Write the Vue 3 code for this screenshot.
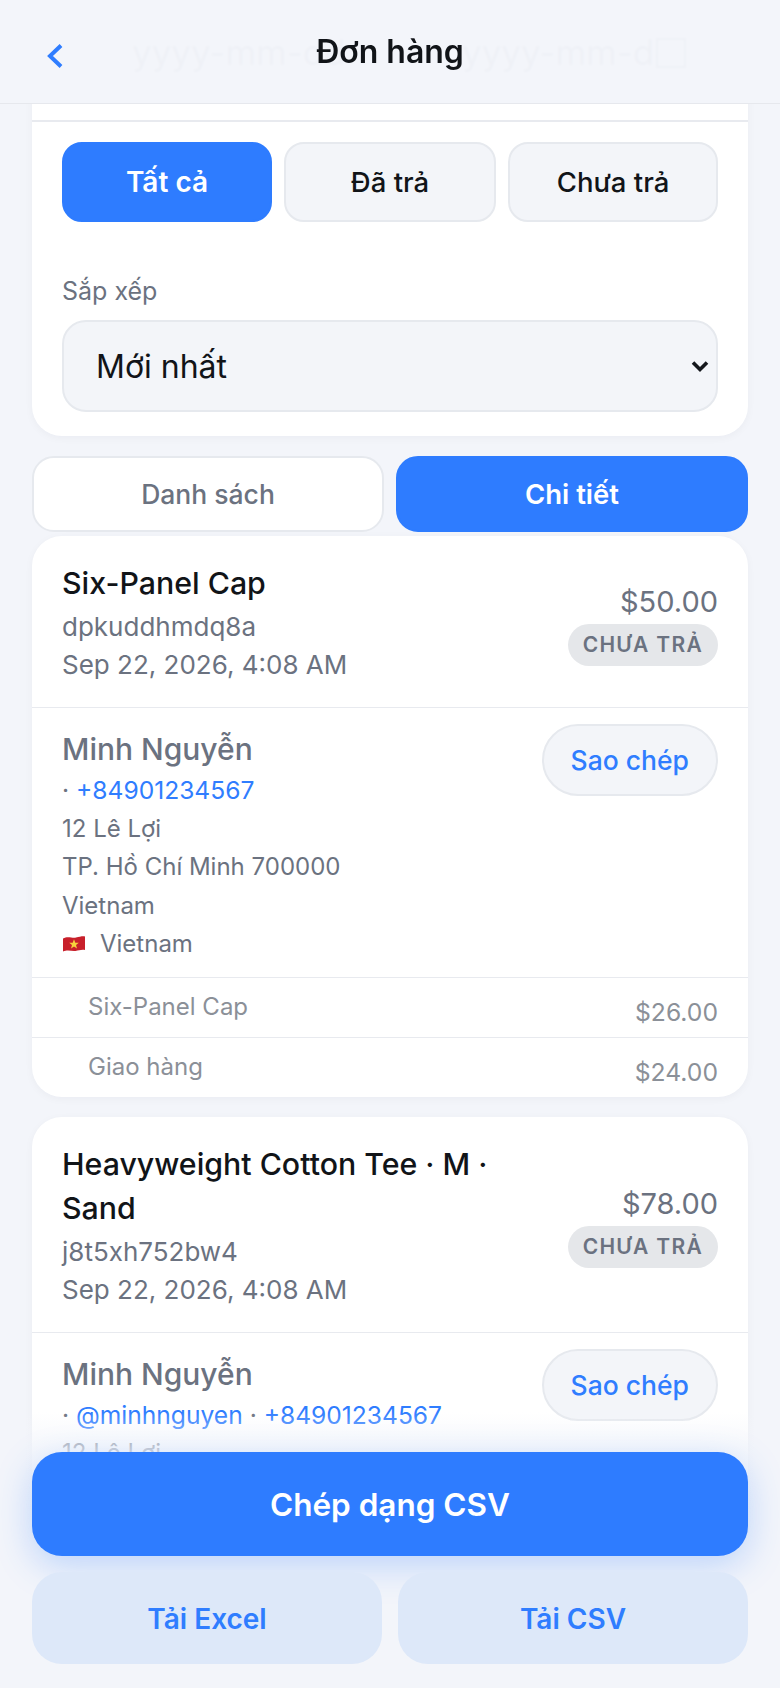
<script setup>
import { ref } from "vue";

const statusFilters = ["Tất cả", "Đã trả", "Chưa trả"];
const activeStatus = ref("Tất cả");
const viewMode = ref("detail");

const orders = [
  {
    title: "Six-Panel Cap",
    code: "dpkuddhmdq8a",
    date: "Sep 22, 2026, 4:08 AM",
    total: "$50.00",
    contacts: ["+84901234567"],
    lines: [
      { label: "Six-Panel Cap", price: "$26.00" },
      { label: "Giao hàng", price: "$24.00" }
    ]
  },
  {
    title: "Heavyweight Cotton Tee · M · Sand",
    code: "j8t5xh752bw4",
    date: "Sep 22, 2026, 4:08 AM",
    total: "$78.00",
    contacts: ["@minhnguyen", "+84901234567"],
    lines: [
      { label: "Heavyweight Cotton Tee · M · Sand", price: "$54.00" },
      { label: "Giao hàng", price: "$24.00" }
    ]
  }
];
</script>

<template>
  <div class="screen">
    <main class="content">
      <section class="card filters">
        <div class="date-row">
          <div class="date-field from"><span class="date-text">yyyy-mm-dd</span></div>
          <div class="date-field to"><span class="date-text">yyyy-mm-dd</span><span class="date-icon"></span></div>
        </div>
        <div class="filter-body">
          <div class="status-row">
            <button
              v-for="status in statusFilters"
              :key="status"
              type="button"
              :class="['status-btn', { active: activeStatus === status }]"
              @click="activeStatus = status"
            >
              {{ status }}
            </button>
          </div>
          <label class="sort-label" for="sort">Sắp xếp</label>
          <div class="select-wrap">
            <select id="sort" class="sort-select">
              <option>Mới nhất</option>
              <option>Cũ nhất</option>
            </select>
            <svg class="select-arrow" width="20" height="14" viewBox="0 0 20 14" fill="none">
              <path d="M3 3.5 10 10.5 17 3.5" stroke="#14171c" stroke-width="3.6" />
            </svg>
          </div>
        </div>
      </section>

      <div class="view-toggle">
        <button type="button" :class="['view-btn', { active: viewMode === 'list' }]" @click="viewMode = 'list'">Danh sách</button>
        <button type="button" :class="['view-btn', { active: viewMode === 'detail' }]" @click="viewMode = 'detail'">Chi tiết</button>
      </div>

      <article v-for="order in orders" :key="order.code" class="card order">
        <div class="order-head">
          <div class="order-info">
            <div class="order-title">{{ order.title }}</div>
            <div class="order-sub first">{{ order.code }}</div>
            <div class="order-sub">{{ order.date }}</div>
          </div>
          <div class="order-side">
            <div class="order-total">{{ order.total }}</div>
            <span class="badge">CHƯA TRẢ</span>
          </div>
        </div>

        <div class="customer">
          <div class="customer-info">
            <div class="customer-name">Minh Nguyễn</div>
            <div class="contact-line">
              <template v-for="contact in order.contacts" :key="contact">
                · <a class="contact">{{ contact }}</a>
                {{ " " }}
              </template>
            </div>
            <div class="info-line">12 Lê Lợi</div>
            <div class="info-line">TP. Hồ Chí Minh 700000</div>
            <div class="info-line">Vietnam</div>
            <div class="info-line country">
              <svg class="flag" width="24" height="18" viewBox="0 0 24 18">
                <path d="M1 3.5C6 0.5 10 3.5 14 2.6 17.5 1.8 20 1 23 1.4V15C19 14.4 17 15.6 13.5 16 9.5 16.5 6 14.500 1 16.600Z" fill="#c8202b" />
                <path d="M12 4.300 13.300 7.700 16.800 7.800 14 10 15 13.400 12 11.400 9 13.400 10 10 7.200 7.800 10.700 7.700Z" fill="#f6d33c" />
              </svg>
              <span>Vietnam</span>
            </div>
          </div>
          <button type="button" class="copy-btn">Sao chép</button>
        </div>

        <div v-for="line in order.lines" :key="line.label" class="line-row">
          <span class="line-label">{{ line.label }}</span>
          <span class="line-price">{{ line.price }}</span>
        </div>
      </article>
    </main>

    <header class="topbar">
      <svg class="back-icon" width="18" height="24" viewBox="0 0 18 24" fill="none">
        <path d="M15 1.500 4 12 15 22.500" stroke="#2f7dff" stroke-width="4" />
      </svg>
      <h1>Đơn hàng</h1>
    </header>

    <footer class="actions">
      <button type="button" class="primary-btn">Chép dạng CSV</button>
      <div class="secondary-row">
        <button type="button" class="secondary-btn">Tải Excel</button>
        <button type="button" class="secondary-btn">Tải CSV</button>
      </div>
    </footer>
  </div>
</template>

<style>
body {
  background: #f3f5fa;
}
</style>

<style scoped>
.screen {
  position: relative;
  height: 1688px;
  overflow: hidden;
  background: #f3f5fa;
  font-family: Inter, "Noto Sans", sans-serif;
  color: #111418;
}

button {
  font-family: inherit;
  cursor: pointer;
}

.content {
  display: flex;
  flex-direction: column;
  padding: 0 32px;
}

.card {
  background: #fff;
  border-radius: 30px;
  box-shadow: 0 2px 8px rgba(20, 30, 60, 0.04);
}

.filters {
  border-radius: 0 0 30px 30px;
}

.date-row {
  display: flex;
  gap: 10px;
  height: 122px;
  padding: 30px 30px 0;
  box-sizing: border-box;
  border-bottom: 2px solid #e8eaef;
}

.date-field {
  flex: 1 1 0;
  min-width: 0;
  display: flex;
  justify-content: space-between;
  height: 44px;
  box-sizing: border-box;
  overflow: hidden;
  font-size: 35px;
  line-height: 44px;
  color: #6b7280;
}

.date-field.from {
  padding-left: 70px;
}

.date-field.to {
  padding-left: 96px;
  padding-right: 32px;
}

.date-text {
  white-space: nowrap;
  overflow: hidden;
}

.date-icon {
  width: 26px;
  height: 26px;
  flex-shrink: 0;
  margin-top: 8px;
  border: 2px solid #6b7280;
}

.filter-body {
  padding: 20px 30px 24px;
}

.status-row {
  display: grid;
  grid-template-columns: 210fr 212fr 210fr;
  gap: 12px;
}

.status-btn {
  height: 80px;
  border: 2px solid #e6e9ee;
  border-radius: 20px;
  background: #f3f5f9;
  color: #111418;
  font-size: 27.500px;
  font-weight: 500;
}

.status-btn.active {
  border-color: #2e7cff;
  background: #2e7cff;
  color: #fff;
  font-size: 28px;
  font-weight: 600;
}

.sort-label {
  display: block;
  margin-top: 50px;
  margin-bottom: 10px;
  font-size: 25px;
  line-height: 38px;
  color: #6b7280;
}

.select-wrap {
  position: relative;
}

.sort-select {
  display: block;
  width: 100%;
  height: 92px;
  padding: 0 32px;
  border: 2px solid #e6e9ee;
  border-radius: 24px;
  background: #f3f5f9;
  appearance: none;
  font-family: inherit;
  font-size: 32px;
  color: #111418;
}

.select-arrow {
  position: absolute;
  top: 39px;
  right: 8px;
}

.view-toggle {
  display: grid;
  grid-template-columns: 1fr 1fr;
  gap: 12px;
  margin: 20px 0 4px;
}

.view-btn {
  height: 76px;
  border: 2px solid #e6e9ee;
  border-radius: 22px;
  background: #fff;
  color: #6b7280;
  font-size: 26.500px;
  font-weight: 500;
}

.view-btn.active {
  border-color: #2e7cff;
  background: #2e7cff;
  color: #fff;
  font-size: 27.500px;
  font-weight: 600;
}

.order {
  margin-bottom: 20px;
  overflow: hidden;
}

.order-head {
  display: flex;
  align-items: center;
  justify-content: space-between;
  gap: 40px;
  padding: 25px 30px 23px;
  border-bottom: 1px solid #e8eaef;
}

.order-info {
  flex: 1;
  min-width: 0;
}

.order-title {
  font-size: 30.300px;
  font-weight: 500;
  line-height: 44px;
}

.order-sub {
  font-size: 26px;
  line-height: 38px;
  color: #6b7280;
}

.order-sub.first {
  margin-top: 3px;
}

.order-side {
  display: flex;
  flex-direction: column;
  align-items: flex-end;
  gap: 2px;
  flex-shrink: 0;
  margin-top: 2px;
}

.order-total {
  font-size: 29px;
  font-weight: 400;
  line-height: 40px;
  color: #6b7280;
}

.badge {
  padding: 0 15px;
  border-radius: 21px;
  background: #e5e7ea;
  color: #6b7280;
  font-size: 21px;
  font-weight: 600;
  line-height: 42px;
  letter-spacing: 1.300px;
}

.customer {
  display: flex;
  align-items: flex-start;
  justify-content: space-between;
  padding: 16px 30px 13px;
  border-bottom: 1px solid #e8eaef;
}

.customer-info {
  padding-top: 3px;
}

.customer-name {
  font-size: 30px;
  font-weight: 500;
  line-height: 44px;
  color: #6b7280;
}

.contact-line {
  font-size: 24.600px;
  line-height: 38.500px;
  color: #6b7280;
}

.info-line {
  font-size: 24px;
  line-height: 38.500px;
  color: #6b7280;
}

.contact {
  color: #2f7dff;
}

.country {
  display: flex;
  align-items: center;
  gap: 14px;
}

.flag {
  display: block;
}

.copy-btn {
  height: 72px;
  padding: 0 27px;
  border: 2px solid #e6e9ee;
  border-radius: 36px;
  background: #f3f5f9;
  color: #2f7dff;
  font-size: 26.500px;
  font-weight: 500;
}

.line-row {
  display: flex;
  justify-content: space-between;
  padding: 12px 30px 13px 56px;
  border-bottom: 1px solid #e8eaef;
}

.line-row:last-child {
  border-bottom: none;
}

.line-label,
.line-price {
  font-size: 24px;
  line-height: 34px;
  color: #8b9098;
}

.line-price {
  margin-top: 5px;
  margin-bottom: -5px;
  font-size: 24.700px;
}

.topbar {
  position: absolute;
  top: 0;
  left: 0;
  right: 0;
  height: 104px;
  box-sizing: border-box;
  border-bottom: 1px solid #e6e8ed;
  background: rgba(243, 245, 250, 0.97);
  backdrop-filter: blur(1px);
}

.topbar h1 {
  margin: 0;
  font-size: 32px;
  font-weight: 600;
  line-height: 104px;
  text-align: center;
  color: #111418;
}

.back-icon {
  position: absolute;
  left: 46px;
  top: 44px;
}

.actions {
  position: absolute;
  left: 0;
  right: 0;
  bottom: 0;
  padding: 56px 32px 24px;
  background: linear-gradient(to bottom, rgba(243, 245, 250, 0) 16px, rgba(243, 245, 250, 0.75) 56px, #f3f5fa 150px);
}

.primary-btn {
  display: block;
  width: 100%;
  height: 104px;
  border: none;
  border-radius: 30px;
  background: #2e7cff;
  color: #fff;
  font-size: 31.500px;
  font-weight: 600;
  box-shadow: 0 10px 36px rgba(46, 124, 255, 0.28);
}

.secondary-row {
  display: grid;
  grid-template-columns: 1fr 1fr;
  gap: 16px;
  margin-top: 16px;
}

.secondary-btn {
  height: 92px;
  padding-top: 3px;
  border: none;
  border-radius: 30px;
  background: #dde8f9;
  color: #2f7dff;
  font-size: 28px;
  font-weight: 600;
}
</style>
